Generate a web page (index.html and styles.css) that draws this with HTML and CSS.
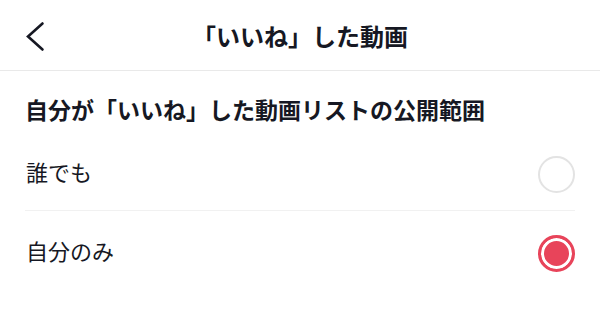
FILE: index.html
```html
<!DOCTYPE html>
<html lang="ja">
<head>
<meta charset="utf-8">
<title>「いいね」した動画</title>
<link rel="stylesheet" href="styles.css">
</head>
<body>
<header class="topbar">
  <button class="back" aria-label="戻る">
    <svg width="24" height="33" viewBox="0 0 24 33"><path d="M19.5 3.5 L5 16.5 L19.5 29.5" fill="none" stroke="#161823" stroke-width="2.6" stroke-linecap="round" stroke-linejoin="miter"/></svg>
  </button>
  <h1 class="title">「いいね」した動画</h1>
  <span class="spacer"></span>
</header>
<main class="content">
  <h2 class="section-title">自分が「いいね」した動画リストの公開範囲</h2>
  <ul class="options">
    <li class="option">
      <span class="label">誰でも</span>
      <span class="radio"></span>
    </li>
    <li class="option">
      <span class="label">自分のみ</span>
      <span class="radio checked"></span>
    </li>
  </ul>
</main>
</body>
</html>
```
FILE: styles.css
```css
* { box-sizing: border-box; }
html, body {
  margin: 0;
  padding: 0;
  background: #ffffff;
  color: #161823;
  font-family: "Noto Sans CJK JP", "Noto Sans", sans-serif;
}
.topbar {
  display: grid;
  grid-template-columns: 1fr auto 1fr;
  align-items: center;
  height: 71px;
  border-bottom: 1px solid #e9e9e9;
}
.back {
  justify-self: start;
  margin-left: 23px;
  margin-top: 3px;
  padding: 0;
  border: 0;
  background: none;
  display: flex;
}
.title {
  margin: 0;
  font-size: 24px;
  font-weight: 700;
  line-height: 32px;
  margin-top: 2px;
}
.content {
  padding: 22px 25px 0;
}
.section-title {
  margin: 0;
  font-size: 23px;
  font-weight: 700;
  line-height: 32px;
}
.options {
  list-style: none;
  margin: 7px 0 0;
  padding: 0;
}
.option {
  display: flex;
  align-items: center;
  justify-content: space-between;
  height: 79px;
  border-bottom: 1px solid #f1f1f1;
}
.option:last-child {
  border-bottom: 0;
  height: 78px;
}
.label {
  font-size: 22px;
  font-weight: 400;
  line-height: 30px;
  padding-left: 1px;
}
.radio {
  width: 37px;
  height: 37px;
  margin-top: 7px;
  border-radius: 50%;
  border: 2px solid #e3e3e3;
}
.radio.checked {
  border: 3px solid #e8445a;
  background: #e8445a;
  box-shadow: inset 0 0 0 3px #ffffff;
}
```
